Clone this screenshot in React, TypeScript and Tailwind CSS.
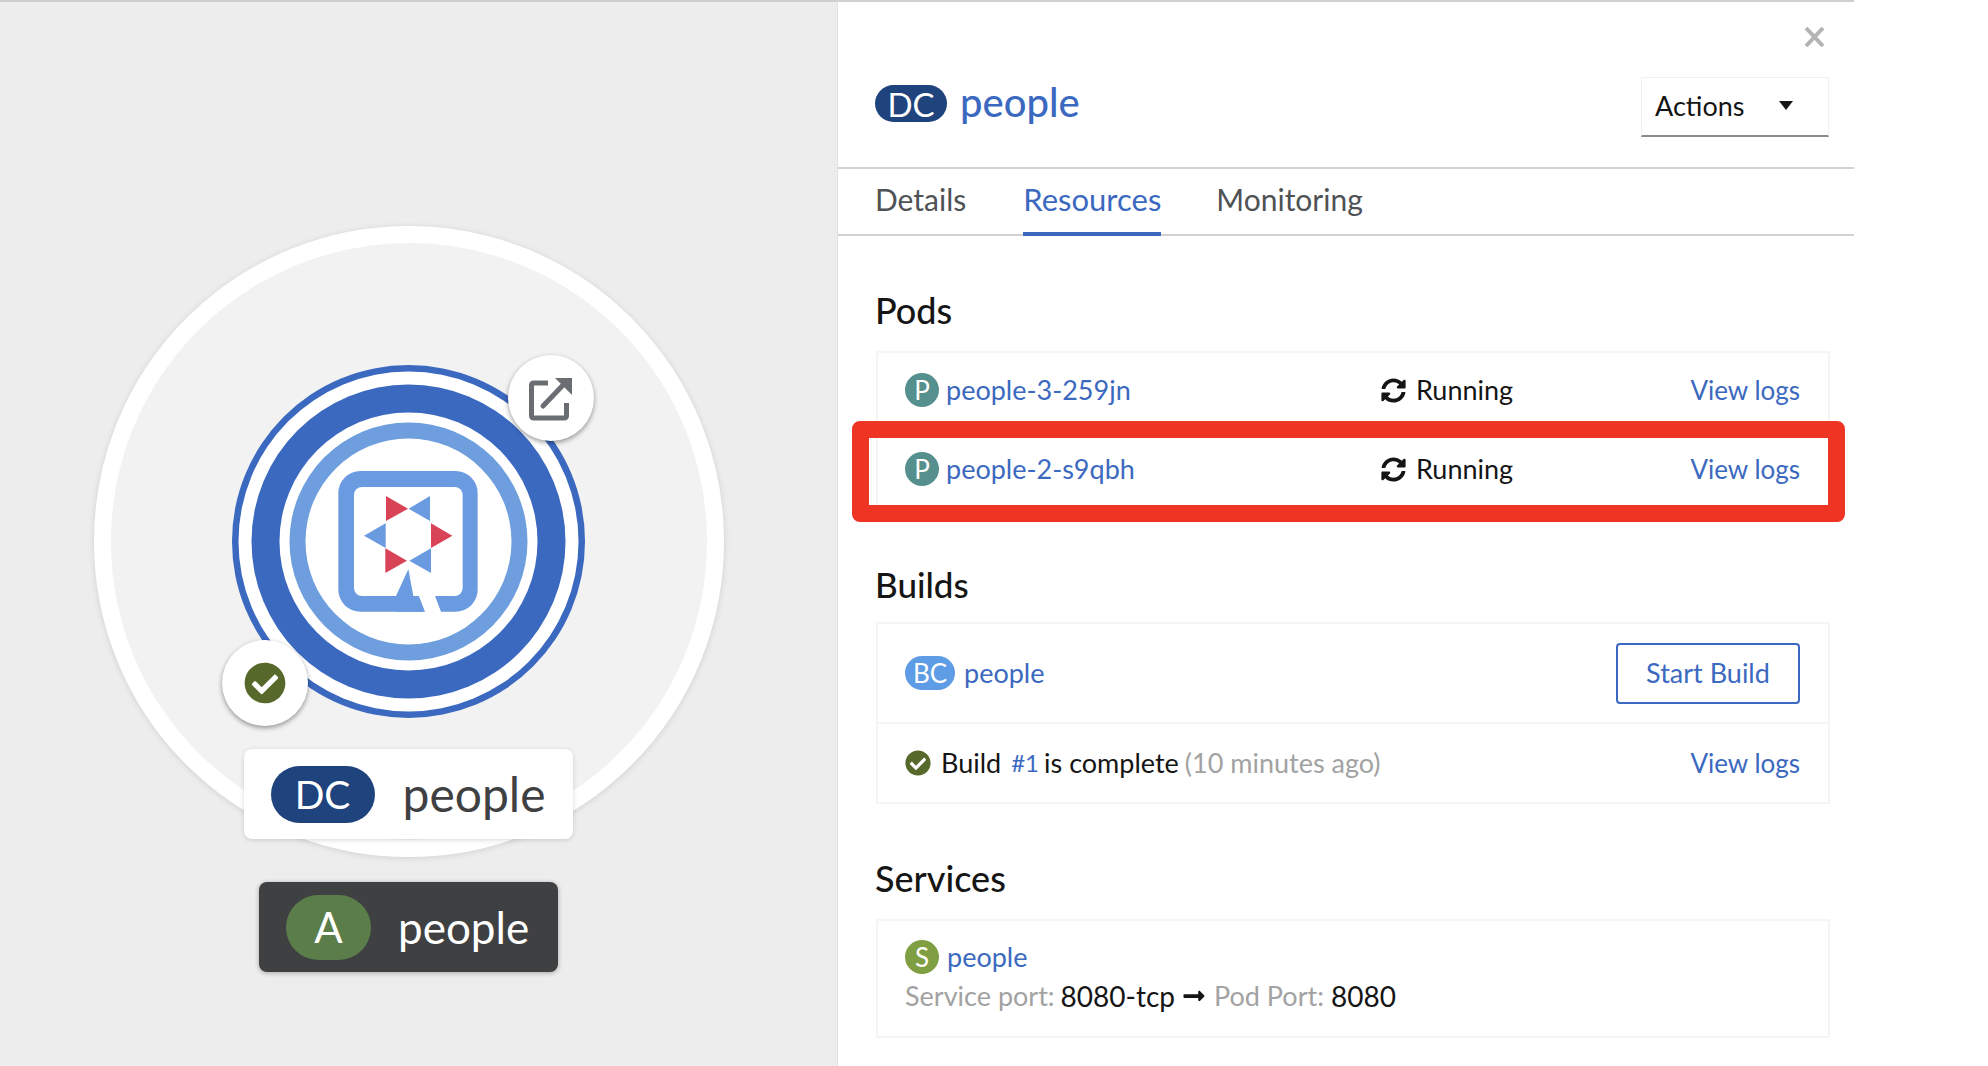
import { FaCheckCircle, FaLongArrowAltRight, FaSyncAlt } from "react-icons/fa";

const font = { fontFamily: '"Lato", "Noto Sans", sans-serif' };

function Badge({ text, className }: { text: string; className: string }) {
  return (
    <span
      className={`flex h-[34px] shrink-0 items-center justify-center rounded-full text-[26px] text-white ${className}`}
    >
      {text}
    </span>
  );
}

function ViewLogs() {
  return <a className="text-[26px] text-[#3b69c0]">View logs</a>;
}

function PodRow({ name }: { name: string }) {
  return (
    <div className="flex h-full items-center pb-[2px] pl-[27px] pr-[28px]">
      <Badge text="P" className="w-[34px] bg-[#56908e]" />
      <a className="ml-[7px] w-[435px] text-[#3b69c0]">{name}</a>
      <FaSyncAlt className="h-[25px] w-[25px] text-[#151515]" />
      <span className="ml-[10px] text-[#151515]">Running</span>
      <span className="ml-auto">
        <ViewLogs />
      </span>
    </div>
  );
}

function QuarkusLogo() {
  // coordinates of the mark come from a 480 unit crop, centred on the node
  return (
    <svg width="353" height="353" viewBox="0 0 353 353">
      <circle cx="176.5" cy="176.5" r="176.5" fill="#3b69c0" />
      <circle cx="176.5" cy="176.5" r="170" fill="#ffffff" />
      <circle cx="176.5" cy="176.5" r="157" fill="#3b69c0" />
      <circle cx="176.5" cy="176.5" r="129" fill="#ffffff" />
      <circle cx="176.5" cy="176.5" r="119" fill="#6e9ede" />
      <circle cx="176.5" cy="176.5" r="103" fill="#ffffff" />
      <g transform="translate(98 96) scale(0.33333)">
        <rect x="25" y="30" width="418" height="422" rx="66" fill="#6a9ae0" />
        <rect x="72" y="78" width="326" height="327" rx="24" fill="#ffffff" />
        <polygon points="235,325 198,405 198,452 281,452" fill="#6a9ae0" />
        <polygon points="235,325 288,460 336,460 315,405 250,405" fill="#ffffff" />
        <polygon points="168,105 234,143 168,180" fill="#d94357" />
        <polygon points="300,105 236,143 300,180" fill="#6a9ae0" />
        <polygon points="167,187 102,224 167,261" fill="#6a9ae0" />
        <polygon points="303,187 367,224 303,261" fill="#d94357" />
        <polygon points="166,262 231,299 166,336" fill="#d94357" />
        <polygon points="303,262 238,299 303,336" fill="#6a9ae0" />
      </g>
    </svg>
  );
}

function TopologyNode() {
  return (
    <div className="relative mt-[224px] flex h-[631px] w-[630px] items-center justify-center rounded-full border-[17px] border-white bg-[#f2f2f2] shadow-[0_1px_6px_rgba(0,0,0,0.12)]">
      <QuarkusLogo />

      {/* route decorator */}
      <div className="absolute left-[397px] top-[112px] flex h-[86px] w-[86px] items-center justify-center rounded-full bg-white shadow-[0_2px_5px_rgba(0,0,0,0.4)]">
        <svg width="48" height="48" viewBox="0 0 48 48" fill="none" stroke="#6a6e73" strokeWidth="5">
          <path d="M21 9H6.5a2 2 0 0 0-2 2v31a2 2 0 0 0 2 2h31a2 2 0 0 0 2-2V29" />
          <path d="M16 32 40 7" strokeLinecap="round" />
          <path d="M28 4h17v17z" fill="#6a6e73" stroke="none" />
        </svg>
      </div>

      {/* status decorator */}
      <div className="absolute left-[111px] top-[397px] flex h-[86px] w-[86px] items-center justify-center rounded-full bg-white shadow-[0_2px_5px_rgba(0,0,0,0.4)]">
        <FaCheckCircle className="h-[42px] w-[42px] text-[#56682a]" />
      </div>

      {/* name label */}
      <div className="absolute left-[133px] top-[506px] flex h-[90px] w-[329px] items-center rounded-lg bg-white shadow-[0_1px_5px_rgba(0,0,0,0.15)]">
        <span className="ml-[27px] flex h-[57px] w-[104px] items-center justify-center rounded-full bg-[#1f437d] text-[39px] text-white">
          DC
        </span>
        <span className="ml-[28px] text-[48px] text-[#3f4042]">people</span>
      </div>
    </div>
  );
}

export default function App() {
  return (
    <div className="flex h-[1066px] w-[1988px] overflow-hidden bg-white" style={font}>
      {/* topology canvas */}
      <div className="flex h-full w-[837px] shrink-0 flex-col items-center border-t-2 border-[#cfcfcf] bg-[#ededed] pr-[20px]">
        <TopologyNode />
        <div className="mt-[25px] flex h-[90px] w-[299px] items-center rounded-lg bg-[#3f4042] shadow-[0_1px_5px_rgba(0,0,0,0.3)]">
          <span className="ml-[27px] flex h-[65px] w-[85px] items-center justify-center rounded-full bg-[#5a7d4a] text-[42px] text-white">
            A
          </span>
          <span className="ml-[27px] text-[44px] text-white">people</span>
        </div>
      </div>

      {/* side panel */}
      <div className="h-full w-[1017px] shrink-0 border-t-2 border-l border-[#cfcfcf] border-l-[#e2e2e2] text-[27px] leading-[36px] text-[#151515]">
        <div className="h-[167px] border-b-2 border-[#d2d2d2]">
          <div className="flex justify-end pr-[29px] pt-[25px]">
            <svg width="21" height="20" viewBox="0 0 21 20" stroke="#b4b4b4" strokeWidth="4">
              <path d="M2 1l17 18M19 1 2 19" />
            </svg>
          </div>
          <div className="mt-[30px] flex items-start pl-[37px] pr-[25px]">
            <span className="mt-[8px] flex h-[37px] w-[72px] items-center justify-center rounded-full bg-[#1f437d] text-[33px] text-white">
              DC
            </span>
            <span className="ml-[13px] mt-[3px] text-[40px] font-medium leading-[44px] text-[#3b69c0]">people</span>
            <button className="ml-auto flex h-[60px] w-[188px] items-center border border-b-2 border-[#f0f0f0] border-b-[#8a8d90] pb-[2px] pl-[13px] text-[#151515]">
              Actions
              <svg className="ml-[34px]" width="14" height="9" viewBox="0 0 14 9">
                <path d="M0 0h14L7 9z" fill="#151515" />
              </svg>
            </button>
          </div>
        </div>

        <div className="flex h-[67px] gap-[57px] border-b-2 border-[#d2d2d2] pl-[37px] text-[30px]">
          <span className="pt-[12px] text-[#4f5255]">Details</span>
          <span className="-mb-[2px] border-b-4 border-[#3b69c0] pt-[12px] text-[31px] text-[#3b69c0]">Resources</span>
          <span className="-ml-[2px] pt-[12px] text-[#4f5255]">Monitoring</span>
        </div>

        <div className="w-[992px] pl-[38px]">
          <h2 className="-ml-[1px] mt-[54px] text-[36px] font-medium leading-[40px]">Pods</h2>
          <div className="mt-[21px] border-2 border-[#f5f5f5]">
            <div className="h-[78px] border-b-2 border-[#f5f5f5]">
              <PodRow name="people-3-259jn" />
            </div>
            <div className="relative h-[78px]">
              <PodRow name="people-2-s9qbh" />
              <div className="absolute -bottom-[13px] -left-[26px] -right-[17px] -top-[10px] rounded-lg border-[17px] border-[#ee3524]" />
            </div>
          </div>

          <h2 className="-ml-[1px] mt-[53px] text-[35px] font-medium leading-[40px]">Builds</h2>
          <div className="mt-[18px] border-2 border-[#f5f5f5]">
            <div className="flex h-[100px] items-center border-b-2 border-[#f5f5f5] pl-[27px] pr-[28px]">
              <Badge text="BC" className="w-[50px] bg-[#5e9ce6]" />
              <a className="ml-[9px] text-[#3b69c0]">people</a>
              <button className="ml-auto h-[61px] w-[184px] rounded border-2 border-[#3b69c0] text-[#3b69c0]">
                Start Build
              </button>
            </div>
            <div className="flex h-[78px] items-center pl-[27px] pr-[28px]">
              <FaCheckCircle className="h-[26px] w-[26px] text-[#56682a]" />
              <span className="ml-[10px]">Build</span>
              <a className="ml-[10px] text-[24px] text-[#3b69c0]">#1</a>
              <span className="ml-[5px]">is complete</span>
              <span className="ml-[6px] text-[#a2a2a2]">(10 minutes ago)</span>
              <span className="ml-auto">
                <ViewLogs />
              </span>
            </div>
          </div>

          <h2 className="-ml-[1px] mt-[54px] text-[36px] font-medium leading-[40px]">Services</h2>
          <div className="mt-[21px] h-[119px] border-2 border-[#f5f5f5] pl-[27px] pt-[18px]">
            <div className="flex items-center">
              <Badge text="S" className="w-[34px] bg-[#7f9f42]" />
              <a className="ml-[8px] text-[#3b69c0]">people</a>
            </div>
            <div className="mt-[3px] flex items-center">
              <span className="text-[#a2a2a2]">Service port:</span>
              <span className="ml-[6px] text-[28px]">8080-tcp</span>
              <FaLongArrowAltRight className="ml-[7px] h-[24px] w-[24px]" />
              <span className="ml-[8px] text-[#a2a2a2]">Pod Port:</span>
              <span className="ml-[7px] text-[28px]">8080</span>
            </div>
          </div>
        </div>
      </div>
    </div>
  );
}
